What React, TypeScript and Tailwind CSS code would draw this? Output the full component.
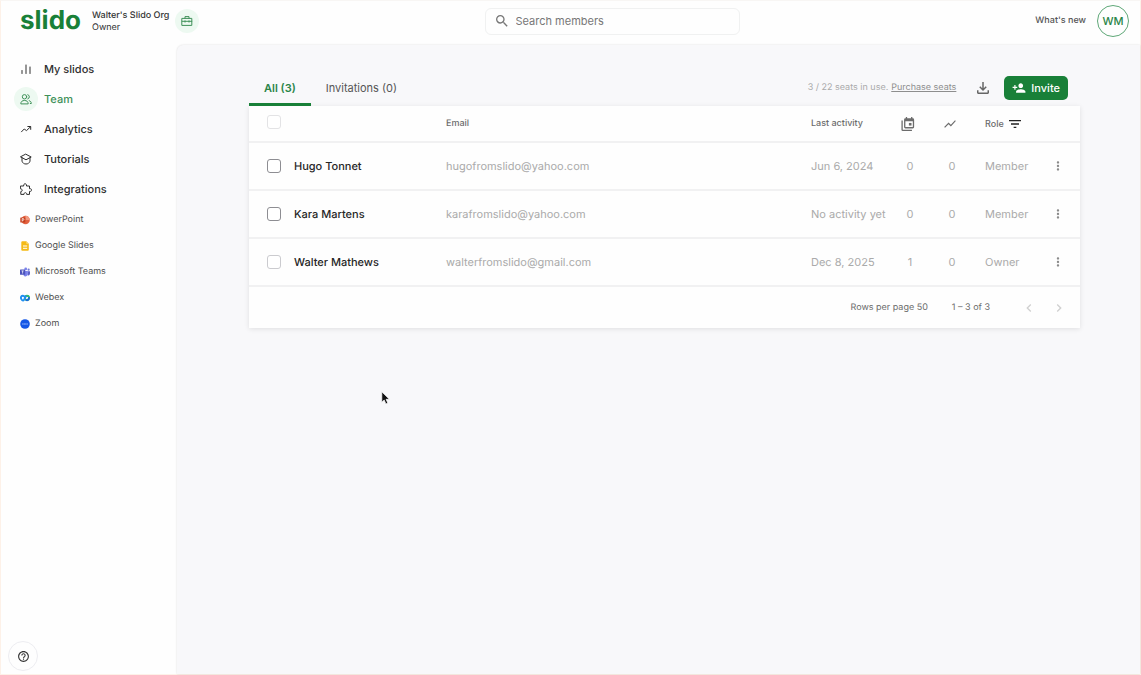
import { useState } from "react";
import {
  MdSearch,
  MdPersonAdd,
  MdOutlineFileDownload,
  MdFilterList,
  MdShowChart,
  MdMoreVert,
  MdChevronLeft,
  MdChevronRight,
  MdHelpOutline,
} from "react-icons/md";

const stroke = {
  fill: "none",
  stroke: "currentColor",
  strokeWidth: 1,
  strokeLinecap: "round" as const,
  strokeLinejoin: "round" as const,
};

function BarsIcon() {
  return (
    <svg viewBox="0 0 12 12" className="size-3" {...stroke}>
      <path d="M2 7.5v3M6 2v8.5M10 4v6.5" />
    </svg>
  );
}

function TeamIcon() {
  return (
    <svg viewBox="0 0 12 12" className="size-3" {...stroke}>
      <circle cx="4.5" cy="3.8" r="2.2" />
      <path d="M.8 10.5c0-2 1.5-3 3.7-3s3.7 1 3.7 3zM7.8 1.7a2.2 2.2 0 0 1 0 4.2M9.2 7.7c1.4.4 2.1 1.3 2.1 2.8h-1" />
    </svg>
  );
}

function TrendIcon() {
  return (
    <svg viewBox="0 0 12 12" className="size-3" {...stroke}>
      <path d="M1.5 8.8 4.2 6l2.3 1.6 4-3.8M7.8 3.5h2.9v2.9" />
    </svg>
  );
}

function TutorialsIcon() {
  return (
    <svg viewBox="0 0 12 12" className="size-3" {...stroke}>
      <path d="M6 1.3 11.2 4 6 6.8.8 4zM2 4.8v3.4C2.6 10 4 11 6 11s3.4-1 4-2.8V4.8" />
    </svg>
  );
}

function PuzzleIcon() {
  return (
    <svg viewBox="0 0 12 12" className="size-3" {...stroke}>
      <path d="M.8 3h2.9c-.5-3 3.3-3 2.8 0h3v2.7c3-.3 3 3 0 2.7v3H6.700c.2-2.300-2.900-2.300-2.700 0H.8V8.600c2-.2 2-2.600 0-2.800z" />
    </svg>
  );
}

function PlanIcon() {
  return (
    <svg viewBox="0 0 12 12" className="size-3" {...stroke}>
      <path d="M1.200 3.400h9.600v7H1.200zM4 3.200V1.600h4v1.600M1.200 6.300h9.600M4 5.800v1.300M8 5.800v1.300" />
    </svg>
  );
}

function EventsIcon() {
  return (
    <svg viewBox="0 0 16 16" className="size-[14px]" fill="currentColor">
      <path d="M.5 4H2v10.500h10.500V16H2A1.500 1.500 0 0 1 .5 14.500z" />
      <path
        fillRule="evenodd"
        d="M5 1.500h.5V0H7v1.500h4.500V0H13v1.500h.5A1.500 1.500 0 0 1 15 3v8.500a1.500 1.500 0 0 1-1.500 1.500H5a1.500 1.500 0 0 1-1.500-1.500V3A1.500 1.500 0 0 1 5 1.500zM5 4.800v6.700h8.500V4.800z"
      />
      <path d="M9 6.800h3v3H9z" />
    </svg>
  );
}

function PowerPointIcon() {
  return (
    <svg viewBox="0 0 10 10" className="size-[10px]">
      <circle cx="5.500" cy="5" r="4.300" fill="#e2613f" />
      <path d="M5.500.7A4.300 4.300 0 0 1 9.800 5H5.500z" fill="#f19a80" />
      <rect x=".3" y="2.500" width="5" height="5" rx=".6" fill="#c43e1c" />
      <path d="M2.200 6.500v-3h.8a.8.800 0 0 1 0 1.800h-.8" fill="none" stroke="#fff" strokeWidth=".7" />
    </svg>
  );
}

function SlidesIcon() {
  return (
    <svg viewBox="0 0 10 10" className="size-[10px]">
      <path d="M2.300.3h4L8.800 2.800v6a1 1 0 0 1-1 1H2.300a1 1 0 0 1-1-1V1.300a1 1 0 0 1 1-1z" fill="#f5ba16" />
      <path d="M6.300.3v2.500h2.500z" fill="#f9dc86" />
      <path d="M3 5h4.200M3 7.300h4.200" stroke="#fff" strokeWidth="1" />
    </svg>
  );
}

function TeamsIcon() {
  return (
    <svg viewBox="0 0 10 10" className="size-[10px]">
      <circle cx="8.600" cy="2.700" r="1.100" fill="#6f78d8" />
      <circle cx="5.700" cy="1.900" r="1.400" fill="#7b83eb" />
      <path d="M7.500 4.200H10v2.600a1.600 1.600 0 0 1-2.500 1.300z" fill="#5b62c8" />
      <path d="M3.500 4h4.300v3a2.300 2.300 0 0 1-4.300 1.200z" fill="#7b83eb" />
      <rect x="0" y="2.500" width="5.200" height="5.200" rx=".5" fill="#4b53bc" />
      <path d="M1.500 3.900h2.200M2.600 3.900v2.700" stroke="#fff" strokeWidth=".7" />
    </svg>
  );
}

function WebexIcon() {
  return (
    <svg viewBox="0 0 10 10" className="size-[10px]" fill="none" strokeWidth="1.900">
      <circle cx="7" cy="5" r="2.100" stroke="#35b96c" />
      <path d="M5 4.300C5.500 2.500 8 2 9 3.900" stroke="#35b96c" />
      <path d="M9 4.200C9 6.500 7.500 7.900 6 6.800" stroke="#1769e0" />
      <path d="M5 4.500C4.300 2.300 1.500 2.300 1 4c-.3 1.500.8 3.700 2.200 3.500C4.700 7.200 4.500 4 6.500 3" stroke="#1f8ef0" />
    </svg>
  );
}

function ZoomIcon() {
  return (
    <svg viewBox="0 0 10 10" className="size-[10px]">
      <circle cx="5" cy="5" r="4.800" fill="#1557e6" />
      <path d="M2.200 5h5.600" stroke="#a9c4ff" strokeWidth="1" strokeDasharray="1.200 .3" />
    </svg>
  );
}

const navItems = [
  { label: "My slidos", icon: BarsIcon },
  { label: "Team", icon: TeamIcon },
  { label: "Analytics", icon: TrendIcon },
  { label: "Tutorials", icon: TutorialsIcon },
  { label: "Integrations", icon: PuzzleIcon },
];

const integrations = [
  { label: "PowerPoint", icon: PowerPointIcon },
  { label: "Google Slides", icon: SlidesIcon },
  { label: "Microsoft Teams", icon: TeamsIcon },
  { label: "Webex", icon: WebexIcon },
  { label: "Zoom", icon: ZoomIcon },
];

const members = [
  { name: "Hugo Tonnet", email: "hugofromslido@yahoo.com", activity: "Jun 6, 2024", events: 0, polls: 0, role: "Member" },
  { name: "Kara Martens", email: "karafromslido@yahoo.com", activity: "No activity yet", events: 0, polls: 0, role: "Member" },
  { name: "Walter Mathews", email: "walterfromslido@gmail.com", activity: "Dec 8, 2025", events: 1, polls: 0, role: "Owner" },
];

const checkbox =
  "block size-[14px] appearance-none rounded-[3px] border bg-white checked:bg-[#198038]";

function Header() {
  return (
    <header className="flex h-[44px] items-center pr-[11px] pb-1 pl-[19px]">
      <div className="flex flex-1 items-center">
        <a href="#" className="text-[26px] leading-8 font-bold text-[#198038]">
          slido
        </a>
        <div className="ml-[11px] pt-[2px] text-[9px] leading-3 whitespace-nowrap text-[#333]">
          <div className="font-medium">Walter's Slido Org</div>
          <div>Owner</div>
        </div>
        <button
          aria-label="Plan"
          className="ml-[6px] flex size-6 items-center justify-center rounded-full bg-[#edf9f1] text-[#3f9159]"
        >
          <PlanIcon />
        </button>
      </div>
      <label className="ml-[75px] flex h-[27px] w-[255px] items-center gap-[6px] rounded-md border border-[#f0f1f1] px-2 text-[#777]">
        <MdSearch className="size-4" />
        <input
          type="search"
          aria-label="Search members"
          placeholder="Search members"
          className="min-w-0 flex-1 text-[11px] outline-none placeholder:text-[#777]"
        />
      </label>
      <div className="flex flex-1 items-center justify-end gap-[11px]">
        <a href="#" className="text-[9px] font-medium text-[#555]">
          What's new
        </a>
        <button className="size-8 rounded-full border border-[#5fa878] text-[11px] font-medium text-[#2b8548]">
          WM
        </button>
      </div>
    </header>
  );
}

function Sidebar() {
  return (
    <aside className="flex w-[176px] shrink-0 flex-col pt-[9px] pb-[3px]">
      <nav>
        {navItems.map((item) => (
          <a
            key={item.label}
            href="#"
            className={`flex h-[30px] items-center gap-[6px] pl-[13px] text-[11px] font-medium ${
              item.label === "Team" ? "text-[#3f9159]" : "text-[#2e2e2e]"
            }`}
          >
            <span
              className={`flex size-6 items-center justify-center rounded-full ${
                item.label === "Team" ? "bg-[#edf9f1]" : ""
              }`}
            >
              <item.icon />
            </span>
            {item.label}
          </a>
        ))}
        <div className="pt-[3px]">
          {integrations.map((item) => (
            <a
              key={item.label}
              href="#"
              className="flex h-[26px] items-center gap-[5px] pl-[19px] text-[9px] text-[#4f4f4f]"
            >
              <item.icon />
              {item.label}
            </a>
          ))}
        </div>
      </nav>
      <button
        aria-label="Help"
        className="mt-auto ml-[7px] flex size-[30px] items-center justify-center rounded-full border border-[#ededf1] text-[#333]"
      >
        <MdHelpOutline className="size-[13px]" />
      </button>
    </aside>
  );
}

function MembersTable() {
  return (
    <div className="bg-[#fefefe] shadow-[0_1px_5px_rgba(0,0,0,0.1)]">
      <table className="w-full table-fixed border-collapse text-left">
        <colgroup>
          <col className="w-[45px]" />
          <col className="w-[152px]" />
          <col />
          <col className="w-[78px]" />
          <col className="w-[42px]" />
          <col className="w-[42px]" />
          <col className="w-[66px]" />
          <col className="w-[41px]" />
        </colgroup>
        <thead>
          <tr className="h-9 border-b-2 border-[#f1f1f2] text-[9px] text-[#6c6c6c]">
            <th className="pb-1 pl-[18px]">
              <input type="checkbox" aria-label="Select all" disabled className={`${checkbox} border-[#e3e3e5]`} />
            </th>
            <th aria-label="Name" />
            <th className="font-medium">Email</th>
            <th className="font-medium">Last activity</th>
            <th className="pl-3">
              <EventsIcon />
            </th>
            <th className="pl-3">
              <MdShowChart className="size-[14px]" />
            </th>
            <th className="pl-3 font-medium">
              <button className="flex items-center gap-[3px]">
                Role
                <MdFilterList className="size-4 text-[#222]" />
              </button>
            </th>
            <th />
          </tr>
        </thead>
        <tbody>
          {members.map((m) => (
            <tr key={m.email} className="h-12 border-b-2 border-[#f1f1f2] text-[11px] text-[#aaa]">
              <td className="pl-[18px]">
                <input
                  type="checkbox"
                  aria-label={`Select ${m.name}`}
                  disabled={m.role === "Owner"}
                  className={`${checkbox} ${m.role === "Owner" ? "border-[#cbcbcf]" : "border-[#8d8d92]"}`}
                />
              </td>
              <td className="font-medium text-[#262626]">{m.name}</td>
              <td>{m.email}</td>
              <td className="whitespace-nowrap">{m.activity}</td>
              <td className="text-center">{m.events}</td>
              <td className="text-center">{m.polls}</td>
              <td className="pl-3">{m.role}</td>
              <td className="pl-3 text-[#8a8a8a]">
                <button aria-label={`Actions for ${m.name}`} className="block">
                  <MdMoreVert className="size-[14px]" />
                </button>
              </td>
            </tr>
          ))}
        </tbody>
      </table>
      <div className="flex h-[41px] items-center justify-end pr-[13px] text-[9px] text-[#6c6c6c]">
        <span>Rows per page 50</span>
        <span className="ml-6">1 – 3 of 3</span>
        <button aria-label="Previous page" disabled className="ml-[31px] text-[#d0d0d0]">
          <MdChevronLeft className="size-4" />
        </button>
        <button aria-label="Next page" disabled className="ml-[14px] text-[#d0d0d0]">
          <MdChevronRight className="size-4" />
        </button>
      </div>
    </div>
  );
}

function Pointer() {
  return (
    <svg viewBox="0 0 10 14" className="pointer-events-none absolute top-[390px] left-[380px] h-[14px] w-[10px]">
      <path
        d="M.8.8v10.400l2.400-2.200 1.700 3.900 1.900-.8-1.700-3.800h3.300z"
        fill="#111"
        stroke="#fff"
        strokeWidth=".7"
      />
    </svg>
  );
}

export default function App() {
  const [tab, setTab] = useState("all");

  return (
    <div className="relative flex min-h-screen flex-col border border-[#fdf1e8] border-t-[#f8f6f4] bg-[#fefefe] font-['Inter',sans-serif] [text-rendering:geometricPrecision]">
      <Header />
      <div className="flex flex-1">
        <Sidebar />
        <main className="min-w-0 flex-1 rounded-tl-md bg-[#f8f8fa] pt-[27px] pr-[60px] pl-[72px] shadow-[0_0_2px_rgba(0,0,0,0.15)]">
          <div className="flex h-[34px] items-stretch">
            <div role="tablist" className="flex">
              <button
                role="tab"
                aria-selected={tab === "all"}
                onClick={() => setTab("all")}
                className={`rounded-t-xs border-b-3 px-[15px] pt-[2px] text-[11px] ${
                  tab === "all" ? "border-[#198038] font-semibold text-[#2b8548]" : "border-transparent text-[#555]"
                }`}
              >
                All (3)
              </button>
              <button
                role="tab"
                aria-selected={tab === "invitations"}
                onClick={() => setTab("invitations")}
                className={`rounded-t-xs border-b-3 px-[15px] pt-[2px] text-[11px] ${
                  tab === "invitations" ? "border-[#198038] font-semibold text-[#2b8548]" : "border-transparent text-[#555]"
                }`}
              >
                Invitations (0)
              </button>
            </div>
            <div className="mb-[2px] ml-auto flex items-center pr-3 text-[9px] text-[#aaa]">
              <span>3 / 22 seats in use.</span>
              <a href="#" className="ml-[3px] text-[#8e8e8e] underline">
                Purchase seats
              </a>
              <button aria-label="Download" className="ml-[18px] text-[#666]">
                <MdOutlineFileDownload className="size-[18px]" />
              </button>
              <button className="ml-3 flex h-6 items-center gap-[5px] rounded-[5px] bg-[#198038] px-2 text-[11px] font-medium text-white">
                <MdPersonAdd className="size-[14px]" />
                Invite
              </button>
            </div>
          </div>
          <MembersTable />
        </main>
      </div>
      <Pointer />
    </div>
  );
}
